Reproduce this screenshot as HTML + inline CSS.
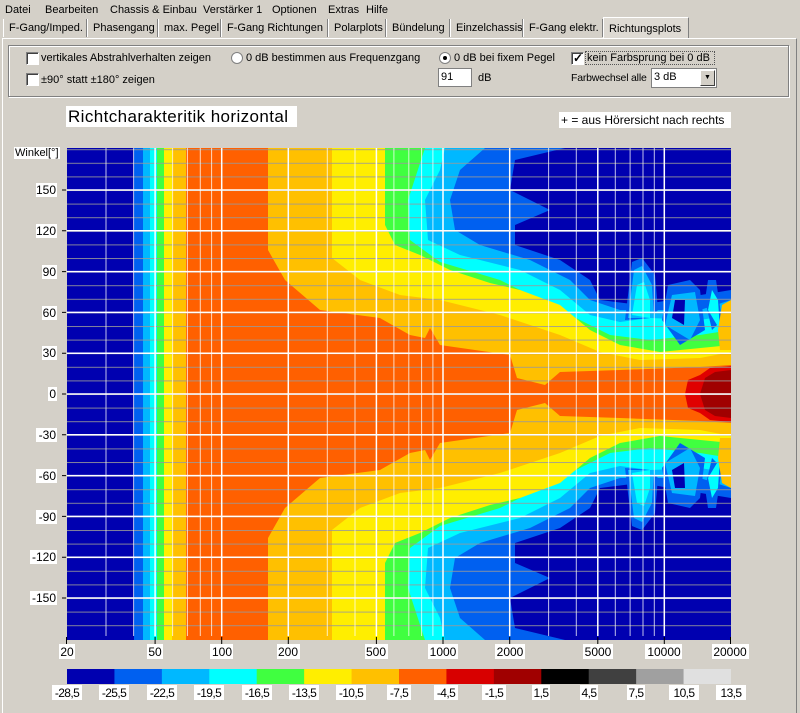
<!DOCTYPE html>
<html><head><meta charset="utf-8"><style>
*{box-sizing:border-box}
body{margin:0;width:800px;height:713px;background:#d4d0c8;font-family:"Liberation Sans",sans-serif;font-size:11px;color:#000;position:relative;overflow:hidden}
.a{position:absolute;white-space:nowrap}
.tab{position:absolute;top:19px;height:18px;border-right:1px solid #808080;border-left:1px solid #fff;padding:3px 5px;font-size:11px;white-space:nowrap;overflow:hidden}
.cb{position:absolute;width:13px;height:13px;background:#fff;border:1px solid #808080;border-right-color:#fff;border-bottom-color:#fff;box-shadow:inset 1px 1px #404040}
.rd{position:absolute;width:12px;height:12px;border-radius:50%;background:#fff;border:1px solid #808080}
</style></head><body>
<div class="a" style="left:5px;top:4px">Datei</div>
<div class="a" style="left:45px;top:4px">Bearbeiten</div>
<div class="a" style="left:110px;top:4px">Chassis &amp; Einbau</div>
<div class="a" style="left:203px;top:4px">Verstärker 1</div>
<div class="a" style="left:272px;top:4px">Optionen</div>
<div class="a" style="left:328px;top:4px">Extras</div>
<div class="a" style="left:366px;top:4px">Hilfe</div>

<div class="tab" style="left:3px;width:84px">F-Gang/Imped.</div>
<div class="tab" style="left:87px;width:71px">Phasengang</div>
<div class="tab" style="left:158px;width:63px">max. Pegel</div>
<div class="tab" style="left:221px;width:107px">F-Gang Richtungen</div>
<div class="tab" style="left:328px;width:58px">Polarplots</div>
<div class="tab" style="left:386px;width:64px">Bündelung</div>
<div class="tab" style="left:450px;width:73px">Einzelchassis</div>
<div class="tab" style="left:523px;width:80px">F-Gang elektr.</div>
<div class="tab" style="left:603px;top:17px;height:22px;width:86px;background:#dedad3;border-top:1px solid #fff;padding-top:5px">Richtungsplots</div>
<div class="a" style="left:2px;top:38px;width:795px;height:675px;border-left:1px solid #fff;border-top:1px solid #fff;border-right:1px solid #808080"></div>

<div class="a" style="left:8px;top:45px;width:781px;height:52px;border:1px solid #808080;box-shadow:1px 1px #fff,inset 1px 1px #fff"></div>
<div class="cb" style="left:26px;top:52px"></div><div class="a" style="left:41px;top:52px">vertikales Abstrahlverhalten zeigen</div>
<div class="cb" style="left:26px;top:73px"></div><div class="a" style="left:41px;top:74px">±90° statt ±180° zeigen</div>
<div class="rd" style="left:231px;top:52px"></div><div class="a" style="left:246px;top:52px">0 dB bestimmen aus Frequenzgang</div>
<div class="rd" style="left:439px;top:52px"><div style="position:absolute;left:3px;top:3px;width:4px;height:4px;border-radius:50%;background:#000"></div></div><div class="a" style="left:454px;top:52px">0 dB bei fixem Pegel</div>
<div class="cb" style="left:571px;top:52px;font-size:12px;line-height:10px;font-weight:bold;padding-left:1px">✓</div>
<div class="a" style="left:585px;top:51px;border:1px dotted #555;padding:0 4px 0 1px">kein Farbsprung bei 0 dB</div>
<div class="a" style="left:438px;top:68px;width:34px;height:19px;background:#fff;border:1px solid #808080;padding:2px 2px">91</div>
<div class="a" style="left:478px;top:72px">dB</div>
<div class="a" style="left:571px;top:72px;font-size:10.5px;letter-spacing:-0.2px">Farbwechsel alle</div>
<div class="a" style="left:651px;top:68px;width:66px;height:20px;background:#fff;border:1px solid #808080;padding:2px 2px">3 dB<div style="position:absolute;right:1px;top:1px;width:15px;height:16px;background:#d4d0c8;border:1px solid #fff;border-right-color:#404040;border-bottom-color:#404040;font-size:7px;text-align:center;line-height:14px">▼</div></div>

<div class="a" style="left:66px;top:106px;width:231px;height:21px;background:#fff;font-size:17px;padding:1px 2px;letter-spacing:0.4px">Richtcharakteritik horizontal</div>
<div class="a" style="left:559px;top:112px;width:172px;height:16px;background:#fff;font-size:12px;padding:1px 0 0 2px">+ = aus Hörersicht nach rechts</div>
<div class="a" style="left:14px;top:147px;background:#fff;padding:0 1px">Winkel[°]</div>

<svg class="a" style="left:0;top:0" width="800" height="713" viewBox="0 0 800 713">
<defs>
<clipPath id="c"><rect x="67" y="148" width="664" height="246"/></clipPath>
<g id="half" clip-path="url(#c)">
<rect x="67" y="148" width="664" height="246" fill="#0000b0"/>
<polygon fill="#0060f0" points="134,148 565,148 515,160 510,190 550,210 515,225 515,245 560,260 590,280 600,300 640,305 731,290 731,394 134,394"/>
<polygon fill="#00b8ff" points="143,148 485,148 460,170 450,200 455,230 480,245 530,260 570,280 590,300 620,310 700,310 731,300 731,394 143,394"/>
<polygon fill="#00ffff" points="150,148 445,148 440,170 425,200 428,240 460,255 520,270 560,290 590,315 620,322 650,318 700,320 731,315 731,394 150,394"/>
<polygon fill="#40ff40" points="157,148 425,148 408,200 410,240 440,262 500,280 540,300 580,320 610,335 650,340 700,335 731,330 731,394 157,394"/>
<polygon fill="#ffee00" points="164,148 385,148 385,225 395,245 420,255 450,270 490,283 520,290 560,305 590,330 620,345 660,352 731,345 731,394 164,394"/>
<polygon fill="#ffc000" points="172,148 332,148 332,258 360,280 400,295 440,300 500,315 560,335 600,352 640,360 700,358 731,352 731,394 172,394"/>
<polygon fill="#ff6000" points="186,148 268,148 268,250 285,280 320,310 380,318 410,335 425,338 430,328 440,345 510,355 517,378 545,385 560,372 620,370 700,367 731,365 731,394 186,394"/>
<polygon fill="#e00000" points="685,394 688,380 700,375 710,368 731,366 731,394"/>
<polygon fill="#a00000" points="700,394 705,378 715,372 731,370 731,394"/>
<polygon fill="#0060f0" points="625,320 632,262 642,258 655,275 658,310 650,318"/>
<polygon fill="#00b8ff" points="628,318 634,270 642,266 652,285 654,318"/>
<polygon fill="#00ffff" points="632,315 637,285 644,282 650,300 650,318"/>
<polygon fill="#0060f0" points="662,320 668,285 690,280 700,290 705,330 680,345"/>
<polygon fill="#00b8ff" points="665,325 672,295 695,292 700,320 690,340"/>
<polygon fill="#0000b0" points="672,318 675,300 685,300 684,325"/>
<polygon fill="#0060f0" points="705,300 708,280 716,280 722,320 712,330"/>
<polygon fill="#00ffff" points="708,310 712,290 718,300 720,330"/>
<polygon fill="#ffc000" points="718,330 722,305 731,300 731,350 720,350"/>
</g>
<pattern id="hp" patternUnits="userSpaceOnUse" x="0" y="394" width="10" height="13.6"><rect width="10" height="1" fill="#999"/></pattern>
</defs>
<use href="#half"/>
<g transform="translate(0,788) scale(1,-1)"><use href="#half"/></g>
<rect x="67" y="148" width="664" height="488" fill="url(#hp)" opacity="0.85"/>
<g stroke="#fff" stroke-width="1" opacity="0.75">
<path d="M106 148V636M133.6 148V636M172.6 148V636M187.4 148V636M200.3 148V636M211.6 148V636M327.3 148V636M355 148V636M393.9 148V636M408.8 148V636M421.6 148V636M432.9 148V636M548.6 148V636M576.3 148V636M615.3 148V636M630.1 148V636M643 148V636M654.3 148V636"/>
</g>
<g stroke="#fff" stroke-width="1.5">
<path d="M155.1 148V636M221.7 148V636M288.3 148V636M376.4 148V636M443 148V636M509.7 148V636M597.8 148V636M664.3 148V636"/>
<path d="M67 190H731M67 230.8H731M67 271.6H731M67 312.4H731M67 353.2H731M67 394H731M67 434.8H731M67 475.6H731M67 516.4H731M67 557.2H731M67 598H731"/>
</g>
<g stroke="#000" stroke-width="1">
<path d="M66.5 637V644M155.1 637V644M221.7 637V644M288.3 637V644M376.4 637V644M443 637V644M509.7 637V644M597.8 637V644M664.3 637V644M730.5 637V644"/>
<path d="M62 190H66M62 230.8H66M62 271.6H66M62 312.4H66M62 353.2H66M62 394H66M62 434.8H66M62 475.6H66M62 516.4H66M62 557.2H66M62 598H66"/>
</g>
<g font-family="Liberation Sans,sans-serif" font-size="12" text-anchor="end">
<g fill="#fff"><rect x="36" y="183" width="21" height="14"/><rect x="36" y="224" width="21" height="14"/><rect x="42" y="265" width="15" height="14"/><rect x="42" y="306" width="15" height="14"/><rect x="42" y="346" width="15" height="14"/><rect x="48" y="387" width="9" height="14"/><rect x="36" y="428" width="21" height="14"/><rect x="36" y="469" width="21" height="14"/><rect x="36" y="510" width="21" height="14"/><rect x="30" y="550" width="27" height="14"/><rect x="30" y="591" width="27" height="14"/></g>
<text x="56" y="194">150</text><text x="56" y="235">120</text><text x="56" y="276">90</text><text x="56" y="317">60</text><text x="56" y="357">30</text><text x="56" y="398">0</text><text x="56" y="439">-30</text><text x="56" y="480">-60</text><text x="56" y="521">-90</text><text x="56" y="561">-120</text><text x="56" y="602">-150</text>
</g>
<g font-family="Liberation Sans,sans-serif" font-size="12" text-anchor="middle">
<g fill="#fff"><rect x="59" y="644" width="16" height="15"/><rect x="147" y="644" width="16" height="15"/><rect x="210" y="644" width="23" height="15"/><rect x="277" y="644" width="23" height="15"/><rect x="365" y="644" width="23" height="15"/><rect x="428" y="644" width="30" height="15"/><rect x="495" y="644" width="30" height="15"/><rect x="583" y="644" width="30" height="15"/><rect x="645" y="644" width="37" height="15"/><rect x="712" y="644" width="37" height="15"/></g>
<text x="67" y="656">20</text><text x="155" y="656">50</text><text x="222" y="656">100</text><text x="288" y="656">200</text><text x="376" y="656">500</text><text x="443" y="656">1000</text><text x="510" y="656">2000</text><text x="598" y="656">5000</text><text x="664" y="656">10000</text><text x="730" y="656">20000</text>
</g>
<g transform="translate(67,669)">
<rect x="0" width="48" height="15" fill="#0000b0"/><rect x="47.43" width="48" height="15" fill="#0060f0"/><rect x="94.86" width="48" height="15" fill="#00b8ff"/><rect x="142.29" width="48" height="15" fill="#00ffff"/><rect x="189.71" width="48" height="15" fill="#40ff40"/><rect x="237.14" width="48" height="15" fill="#ffee00"/><rect x="284.57" width="48" height="15" fill="#ffc000"/><rect x="332" width="48" height="15" fill="#ff6000"/><rect x="379.43" width="48" height="15" fill="#d80000"/><rect x="426.86" width="48" height="15" fill="#a00000"/><rect x="474.29" width="48" height="15" fill="#000"/><rect x="521.71" width="48" height="15" fill="#404040"/><rect x="569.14" width="48" height="15" fill="#a0a0a0"/><rect x="616.57" width="47.4" height="15" fill="#e0e0e0"/>
</g>
<g font-family="Liberation Sans,sans-serif" font-size="12" text-anchor="middle" letter-spacing="-0.6">
<g fill="#fff"><rect x="52" y="685" width="30" height="15"/><rect x="99" y="685" width="30" height="15"/><rect x="147" y="685" width="30" height="15"/><rect x="194" y="685" width="30" height="15"/><rect x="242" y="685" width="30" height="15"/><rect x="289" y="685" width="30" height="15"/><rect x="336" y="685" width="30" height="15"/><rect x="387" y="685" width="24" height="15"/><rect x="434" y="685" width="24" height="15"/><rect x="482" y="685" width="24" height="15"/><rect x="532" y="685" width="18" height="15"/><rect x="580" y="685" width="18" height="15"/><rect x="627" y="685" width="18" height="15"/><rect x="669" y="685" width="30" height="15"/><rect x="716" y="685" width="30" height="15"/></g>
<text x="67" y="697">-28,5</text><text x="114" y="697">-25,5</text><text x="162" y="697">-22,5</text><text x="209" y="697">-19,5</text><text x="257" y="697">-16,5</text><text x="304" y="697">-13,5</text><text x="351" y="697">-10,5</text><text x="399" y="697">-7,5</text><text x="446" y="697">-4,5</text><text x="494" y="697">-1,5</text><text x="541" y="697">1,5</text><text x="589" y="697">4,5</text><text x="636" y="697">7,5</text><text x="684" y="697">10,5</text><text x="731" y="697">13,5</text>
</g>
</svg>
</body></html>
